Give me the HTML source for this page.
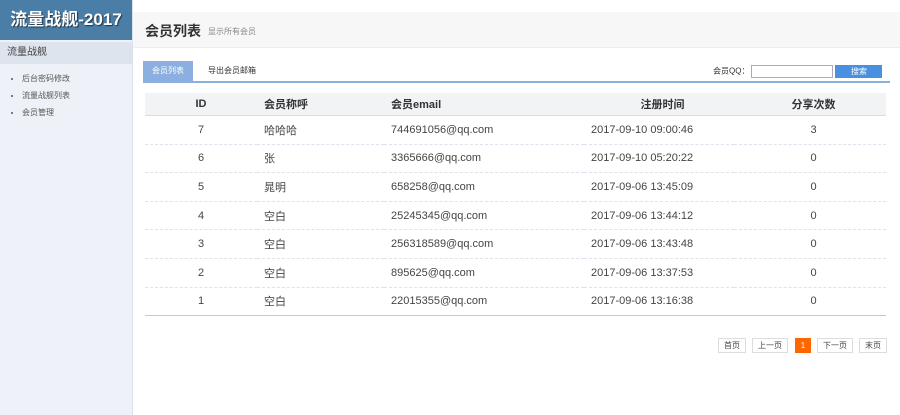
<!DOCTYPE html><html><head><meta charset="utf-8"><style>
body{margin:0;width:900px;height:415px;background:#fff;font-family:"Liberation Sans","Noto Sans CJK SC",sans-serif;position:relative;overflow:hidden;color:#333}
.side{position:absolute;left:0;top:0;width:132px;height:415px;background:#eef2f8;border-right:1px solid #dde3ec}
.logo{height:40px;background:#4a7ea6;color:#fff;font-weight:bold;font-size:17px;line-height:40px;text-align:center;text-shadow:1px 1px 1px #234}
.sh{margin-top:2px;height:22px;background:#dde4ee;font-size:10px;line-height:22px;padding-left:7px;color:#444}
.side ul{margin:6px 0 0;padding:0 0 0 22px;font-size:8px;color:#555;line-height:17px}
.side li{list-style:disc;color:#555}
.top{position:absolute;left:133px;top:12px;width:767px;height:35px;background:#f7f7f7;border-bottom:1px solid #eee}
.top b{position:absolute;left:12px;top:9px;font-size:14px;color:#333}
.top span{position:absolute;left:75px;top:14px;font-size:8px;color:#888}
.tabs{position:absolute;left:143px;top:61px;width:747px;height:20px;border-bottom:2px solid #8ab0dc}
.t1{position:absolute;left:0;top:0;width:50px;height:20px;background:#8aafe0;color:#fff;font-size:8px;line-height:20px;text-align:center}
.t2{position:absolute;left:65px;top:0;font-size:8px;line-height:20px;color:#333}
.q{position:absolute;left:570px;top:4px;font-size:8px;color:#333}
.q i{display:inline-block;width:80px;height:11px;border:1px solid #aab;vertical-align:middle;margin-left:2px}
.q u{display:inline-block;width:47px;height:13px;background:#4a90e0;color:#fff;text-decoration:none;text-align:center;line-height:13px;vertical-align:middle;margin-left:2px}
table{position:absolute;left:145px;top:93px;width:741px;border-collapse:collapse;table-layout:fixed;font-size:11px;color:#444;border-bottom:1px solid #b8cce4}
th{height:22px;background:#f2f3f5;font-size:11px;color:#333;border-bottom:1px solid #d5dce8;padding:0}
td{height:27.6px;border-bottom:1px dashed #dde3ec;padding:0}
td:not(:first-child),th:not(:first-child){text-indent:7px}
tr.last td{border-bottom:none}
.c{text-align:center}
.pg{position:absolute;top:338px;font-size:8px;height:13px;line-height:13px;border:1px solid #ddd;color:#444;text-align:center}
</style></head><body>
<div class="side"><div class="logo">流量战舰-2017</div><div class="sh">流量战舰</div>
<ul><li>后台密码修改</li><li>流量战舰列表</li><li>会员管理</li></ul></div>
<div class="top"><b>会员列表</b><span>显示所有会员</span></div>
<div class="tabs"><div class="t1">会员列表</div><div class="t2">导出会员邮箱</div>
<div class="q">会员QQ：<i></i><u>搜索</u></div></div>
<table>
<colgroup><col style="width:112px"><col style="width:127px"><col style="width:200px"><col style="width:150px"><col style="width:152px"></colgroup>
<tr><th>ID</th><th style="text-align:left">会员称呼</th><th style="text-align:left">会员email</th><th>注册时间</th><th>分享次数</th></tr>
<tr><td class="c">7</td><td>哈哈哈</td><td>744691056@qq.com</td><td>2017-09-10 09:00:46</td><td class="c">3</td></tr>
<tr><td class="c">6</td><td>张</td><td>3365666@qq.com</td><td>2017-09-10 05:20:22</td><td class="c">0</td></tr>
<tr><td class="c">5</td><td>晁明</td><td>658258@qq.com</td><td>2017-09-06 13:45:09</td><td class="c">0</td></tr>
<tr><td class="c">4</td><td>空白</td><td>25245345@qq.com</td><td>2017-09-06 13:44:12</td><td class="c">0</td></tr>
<tr><td class="c">3</td><td>空白</td><td>256318589@qq.com</td><td>2017-09-06 13:43:48</td><td class="c">0</td></tr>
<tr><td class="c">2</td><td>空白</td><td>895625@qq.com</td><td>2017-09-06 13:37:53</td><td class="c">0</td></tr>
<tr class="last"><td class="c">1</td><td>空白</td><td>22015355@qq.com</td><td>2017-09-06 13:16:38</td><td class="c">0</td></tr>
</table>
<div class="pg" style="left:718px;width:26px">首页</div>
<div class="pg" style="left:752px;width:34px">上一页</div>
<div class="pg" style="left:795px;width:14px;background:#f60;color:#fff;border-color:#f60">1</div>
<div class="pg" style="left:817px;width:34px">下一页</div>
<div class="pg" style="left:859px;width:26px">末页</div>
</body></html>
